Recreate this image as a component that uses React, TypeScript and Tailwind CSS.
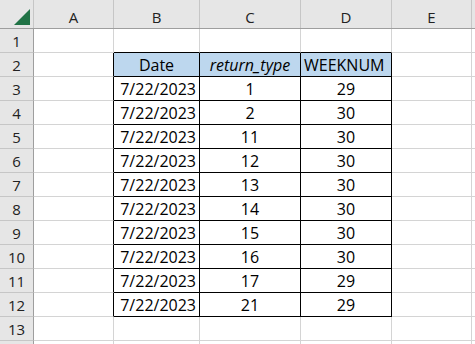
import React from 'react';

// Column widths include the 1px right gridline.
const COLS = [
  { key: 'A', w: 'w-[80px]' },
  { key: 'B', w: 'w-[86px]' },
  { key: 'C', w: 'w-[101px]' },
  { key: 'D', w: 'w-[91px]' },
  { key: 'E', w: 'w-[80px]' },
];

const DATA: [string, string, string][] = [
  ['7/22/2023', '1', '29'],
  ['7/22/2023', '2', '30'],
  ['7/22/2023', '11', '30'],
  ['7/22/2023', '12', '30'],
  ['7/22/2023', '13', '30'],
  ['7/22/2023', '14', '30'],
  ['7/22/2023', '15', '30'],
  ['7/22/2023', '16', '30'],
  ['7/22/2023', '17', '29'],
  ['7/22/2023', '21', '29'],
];

const font = "font-['Open_Sans',sans-serif]";

function Cell({ row, col }: { row: number; col: number }) {
  const tableCol = col >= 1 && col <= 3;
  const tableRow = row >= 2 && row <= 12;
  const inTable = tableCol && tableRow;

  const right = inTable || (col === 0 && tableRow) ? 'border-r-black' : 'border-r-[#d4d4d4]';
  const bottom = inTable || (row === 1 && tableCol) ? 'border-b-black' : 'border-b-[#d4d4d4]';

  let content: React.ReactNode = null;
  let align = 'justify-center';
  let bg = 'bg-white';

  if (row === 2 && tableCol) {
    bg = 'bg-[#bdd7ee]';
    if (col === 1) content = 'Date';
    if (col === 2) content = <span className="italic">return_type</span>;
    if (col === 3) {
      content = 'WEEKNUM';
      align = 'justify-start pl-[3px]';
    }
  } else if (inTable) {
    const d = DATA[row - 3];
    if (col === 1) {
      content = d[0];
      align = 'justify-end pr-[3px]';
    }
    if (col === 2) content = d[1];
    if (col === 3) content = d[2];
  }

  return (
    <div
      className={`${COLS[col].w} ${bg} ${align} flex shrink-0 items-end overflow-visible whitespace-nowrap border-r border-b pb-[1px] text-[16px] leading-[20px] text-black ${right} ${bottom}`}
    >
      {content}
    </div>
  );
}

export default function App() {
  const rows = Array.from({ length: 14 }, (_, i) => i + 1);
  return (
    <div className={`h-[344px] w-[475px] overflow-hidden bg-white ${font}`}>
      {/* column letters */}
      <div className="flex h-[29px] border-b border-b-[#9e9e9e] bg-[#e6e6e6]">
        <div className="relative w-[34px] shrink-0 border-r border-r-[#c6c6c6]">
          <svg className="absolute left-0 top-0" width="33" height="28" viewBox="0 0 33 28">
            <polygon points="30,9 30,25 14,25" fill="#217346" />
          </svg>
        </div>
        {COLS.map((c) => (
          <div
            key={c.key}
            className={`${c.w} flex shrink-0 items-end justify-center border-r border-r-[#c6c6c6] pb-[2px] text-[15px] leading-[18px] text-[#222]`}
          >
            {c.key}
          </div>
        ))}
        <div className="flex-1" />
      </div>

      {rows.map((r) => (
        <div key={r} className="flex h-[24px]">
          <div className="flex w-[34px] shrink-0 items-end justify-center border-r border-b border-r-[#9e9e9e] border-b-[#c6c6c6] bg-[#e6e6e6] pb-[2px] text-[15px] leading-[18px] text-[#222]">
            {r < 14 ? r : null}
          </div>
          {COLS.map((c, ci) => (
            <Cell key={c.key} row={r} col={ci} />
          ))}
          <div className="flex-1 border-b border-b-[#d4d4d4]" />
        </div>
      ))}
    </div>
  );
}
